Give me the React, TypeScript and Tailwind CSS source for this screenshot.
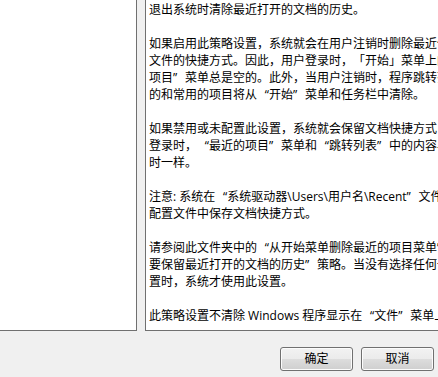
import React from 'react';

const lines = [
  '退出系统时清除最近打开的文档的历史。',
  '',
  '如果启用此策略设置，系统就会在用户注销时删除最近使用的',
  '文件的快捷方式。因此，用户登录时，「开始」菜单上的',
  '项目”菜单总是空的。此外，当用户注销时，程序跳转列表中',
  '的和常用的项目将从“开始”菜单和任务栏中清除。',
  '',
  '如果禁用或未配置此设置，系统就会保留文档快捷方式，',
  '登录时，“最近的项目”菜单和“跳转列表”中的内容与',
  '时一样。',
  '',
  '注意: 系统在“系统驱动器\\Users\\用户名\\Recent”文件夹',
  '配置文件中保存文档快捷方式。',
  '',
  '请参阅此文件夹中的“从开始菜单删除最近的项目菜单”和“不',
  '要保留最近打开的文档的历史”策略。当没有选择任何一个',
  '置时，系统才使用此设置。',
  '',
  '此策略设置不清除 Windows 程序显示在“文件”菜单上',
];

// curly quotes take a full-width cell, as in the Windows dialog
function renderLine(line: string) {
  return line.split(/([“”])/).map((part, i) => {
    if (part === '“') {
      return (
        <span key={i} className="inline-block w-[12px] text-right">
          {part}
        </span>
      );
    }
    if (part === '”') {
      return (
        <span key={i} className="inline-block w-[12px] text-left">
          {part}
        </span>
      );
    }
    return <React.Fragment key={i}>{part}</React.Fragment>;
  });
}

function DialogButton({ label }: { label: string }) {
  return (
    <button className="w-[73px] h-[24px] rounded-[3px] border border-[#707070] bg-[linear-gradient(#f2f2f2_0%,#ebebeb_50%,#dddddd_50%,#cfcfcf_100%)] shadow-[inset_0_0_0_1px_#fcfcfc] text-[12px] leading-none text-black flex items-center justify-center">
      {label}
    </button>
  );
}

export default function App() {
  return (
    <div
      className="w-[438px] h-[377px] bg-[#f0f0f0] flex flex-col overflow-hidden"
      style={{ fontFamily: '"Open Sans", "Noto Sans CJK SC", sans-serif' }}
    >
      {/* Panels */}
      <div className="flex h-[331px] shrink-0">
        <div className="w-[137px] shrink-0 bg-white border-r border-b border-[#707070]" />
        <div className="w-[8px] shrink-0" />
        <div className="flex-1 min-w-0 bg-white border-l border-b border-[#707070] pl-[3px] pt-[1px] overflow-hidden text-[12px] leading-[17px] text-black [text-spacing-trim:space-all]">
          {lines.map((line, i) => (
            <div key={i} className="h-[17px] whitespace-pre" lang="zh-CN">
              {renderLine(line)}
            </div>
          ))}
        </div>
      </div>

      {/* Buttons */}
      <div className="flex justify-end gap-[8px] pr-[4px] pt-[16px]" lang="zh-CN">
        <DialogButton label="确定" />
        <DialogButton label="取消" />
      </div>
    </div>
  );
}
